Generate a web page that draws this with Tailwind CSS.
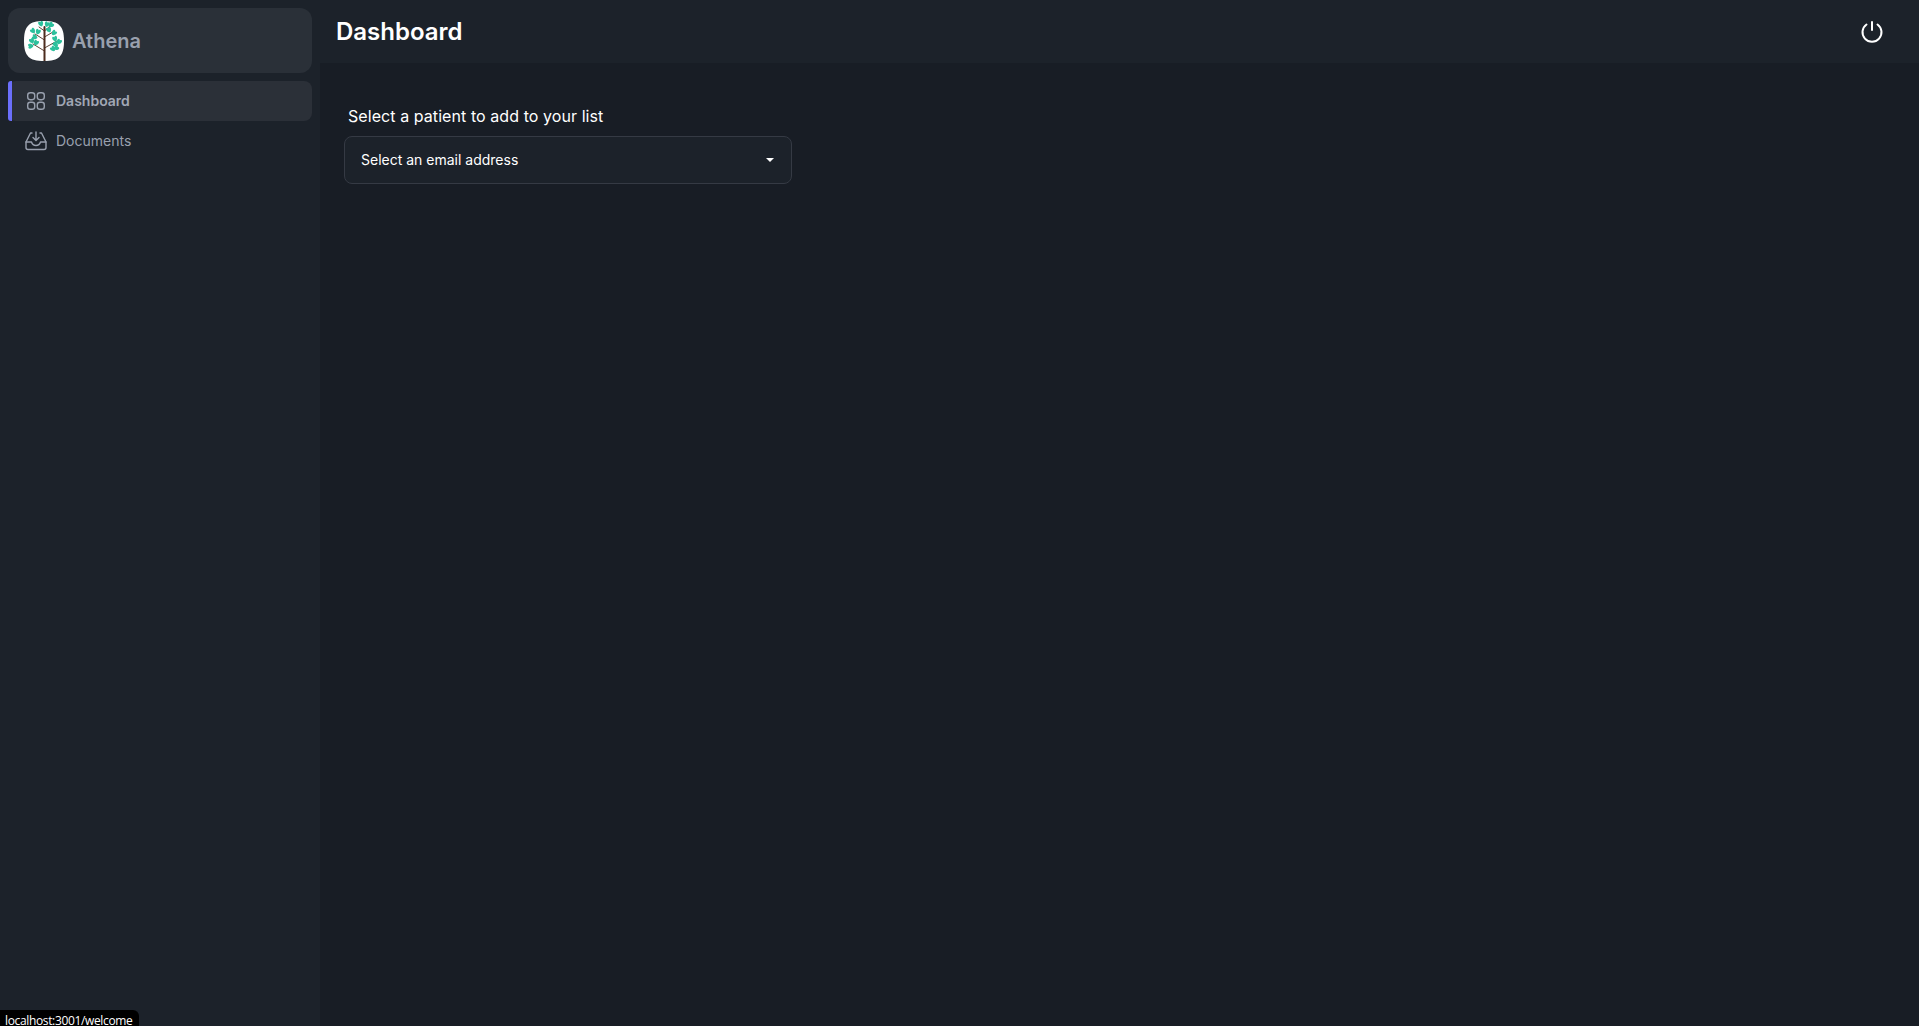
<!DOCTYPE html>
<html lang="en">
<head>
  <meta charset="UTF-8" />
  <meta name="viewport" content="width=device-width, initial-scale=1.0" />
  <title>Athena</title>
  <script src="https://cdn.jsdelivr.net/npm/@tailwindcss/browser@4"></script>
</head>
<body class="bg-[#181d25] font-['Inter',sans-serif] overflow-hidden">
  <div class="relative flex h-[1026px] w-full">

    <!-- Sidebar -->
    <aside class="w-[320px] shrink-0 bg-[#1c222a] px-2 pt-2 flex flex-col">
      <div class="h-[65px] rounded-xl bg-[#2a3038] flex items-center pl-4 gap-2">
        <svg width="40" height="40" viewBox="0 0 40 40" class="shrink-0">
          <defs>
            <path id="leaf" d="M0 2.7 C-2.7 1 -3 -1.8 -1.8 -2.7 C-0.9 -3 -0.3 -2.5 0 -1.8 C0.3 -2.5 0.9 -3 1.8 -2.7 C3 -1.8 2.7 1 0 2.7z" fill="#2cc09c" />
          </defs>
          <path d="M20 0 C35 0 40 5 40 20 C40 35 35 40 20 40 C5 40 0 35 0 20 C0 5 5 0 20 0z" fill="#ffffff" />
          <g stroke="#4d2c1e" fill="none" stroke-linecap="round">
            <path d="M20.5 40 V6" stroke-width="2" />
            <path d="M20.5 30 L9 23 M20.5 27 L33 20 M20.5 19 L11 13 M20.5 16 L29 11 M20.5 10 L15 6 M20.5 10 L26 5" stroke-width="0.9" />
          </g>
          <use href="#leaf" transform="translate(17 3) rotate(-20)" />
          <use href="#leaf" transform="translate(23 3.5) rotate(20)" />
          <use href="#leaf" transform="translate(27 4) rotate(50)" />
          <use href="#leaf" transform="translate(25 9) rotate(-30)" />
          <use href="#leaf" transform="translate(9 10) rotate(-40)" />
          <use href="#leaf" transform="translate(14 11) rotate(20)" />
          <use href="#leaf" transform="translate(11 16) rotate(-70)" />
          <use href="#leaf" transform="translate(30 12) rotate(40)" />
          <use href="#leaf" transform="translate(8 20) rotate(-30)" />
          <use href="#leaf" transform="translate(12 22) rotate(30)" />
          <use href="#leaf" transform="translate(7 25) rotate(-100)" />
          <use href="#leaf" transform="translate(31 18) rotate(-20)" />
          <use href="#leaf" transform="translate(35 21) rotate(30)" />
          <use href="#leaf" transform="translate(31 23) rotate(80)" />
          <use href="#leaf" transform="translate(29 28) rotate(-40)" />
          <use href="#leaf" transform="translate(32 27) rotate(60)" />
        </svg>
        <span class="text-[20px] font-semibold text-[#99a0ae]">Athena</span>
      </div>

      <nav class="mt-2 flex flex-col">
        <a class="relative h-10 rounded-lg bg-[#2b3038] flex items-center pl-[18px] gap-[10px] text-sm font-semibold text-[#a1a7b5]">
          <span class="absolute left-0 inset-y-0 w-1 rounded-l-[3px] bg-[#6b6ffb]"></span>
          <svg width="20" height="20" viewBox="0 0 20 20" fill="none" stroke="#99a0ae" stroke-width="1.4" class="shrink-0">
            <rect x="1.7" y="1.7" width="7" height="7" rx="2.6" />
            <rect x="11.3" y="1.7" width="7" height="7" rx="2.6" />
            <rect x="1.7" y="11.3" width="7" height="7" rx="2.6" />
            <rect x="11.3" y="11.3" width="7" height="7" rx="2.6" />
          </svg>
          Dashboard
        </a>
        <a class="h-10 flex items-center pl-[17px] gap-[9px] text-sm text-[#99a0ae]">
          <svg width="22" height="20" viewBox="0 0 22 20" fill="none" stroke="#99a0ae" stroke-width="1.4" stroke-linecap="round" stroke-linejoin="round" class="shrink-0">
            <path d="M7 2 H5.5 L1 11 V16.5 Q1 18.5 3 18.5 H19 Q21 18.5 21 16.5 V11 L16.5 2 H15" />
            <path d="M1 11 H6.5 Q7.5 14.5 11 14.5 Q14.5 14.5 15.5 11 H21" />
            <path d="M11 1 V9 M8 6.5 L11 9.5 L14 6.5" />
          </svg>
          Documents
        </a>
      </nav>
    </aside>

    <!-- Main -->
    <div class="flex-1 flex flex-col">
      <header class="h-[63px] bg-[#1c222a] flex items-center justify-between pl-4 pr-[35px]">
        <h1 class="text-2xl font-semibold text-white">Dashboard</h1>
        <svg width="24" height="24" viewBox="0 0 24 24" fill="none" stroke="#ffffff" stroke-width="2" stroke-linecap="round" class="mb-[2px]">
          <path d="M12 3 V11" />
          <path d="M6.5 5.5 A9.5 9.5 0 1 0 17.5 5.5" />
        </svg>
      </header>

      <main class="pt-[41px] pl-[24px]">
        <p class="pl-[4px] text-base tracking-[0.07px] text-white">Select a patient to add to your list</p>
        <div class="mt-[8px] w-[448px] h-[48px] rounded-lg border border-[#353a44] bg-[#1c222a] flex items-center justify-between pl-4 pr-[17px]">
          <span class="text-sm text-white">Select an email address</span>
          <span class="w-0 h-0 border-x-[4px] border-x-transparent border-t-[4px] border-t-white"></span>
        </div>
      </main>
    </div>

    <!-- Browser status tooltip -->
    <div class="absolute left-0 bottom-0 h-[16px] w-[139px] rounded-tr-md bg-black pl-[5px] pt-[5px] text-[12px] leading-[11px] tracking-[-0.35px] text-white font-['Open_Sans',sans-serif]">localhost:3001/welcome</div>
  </div>
</body>
</html>
